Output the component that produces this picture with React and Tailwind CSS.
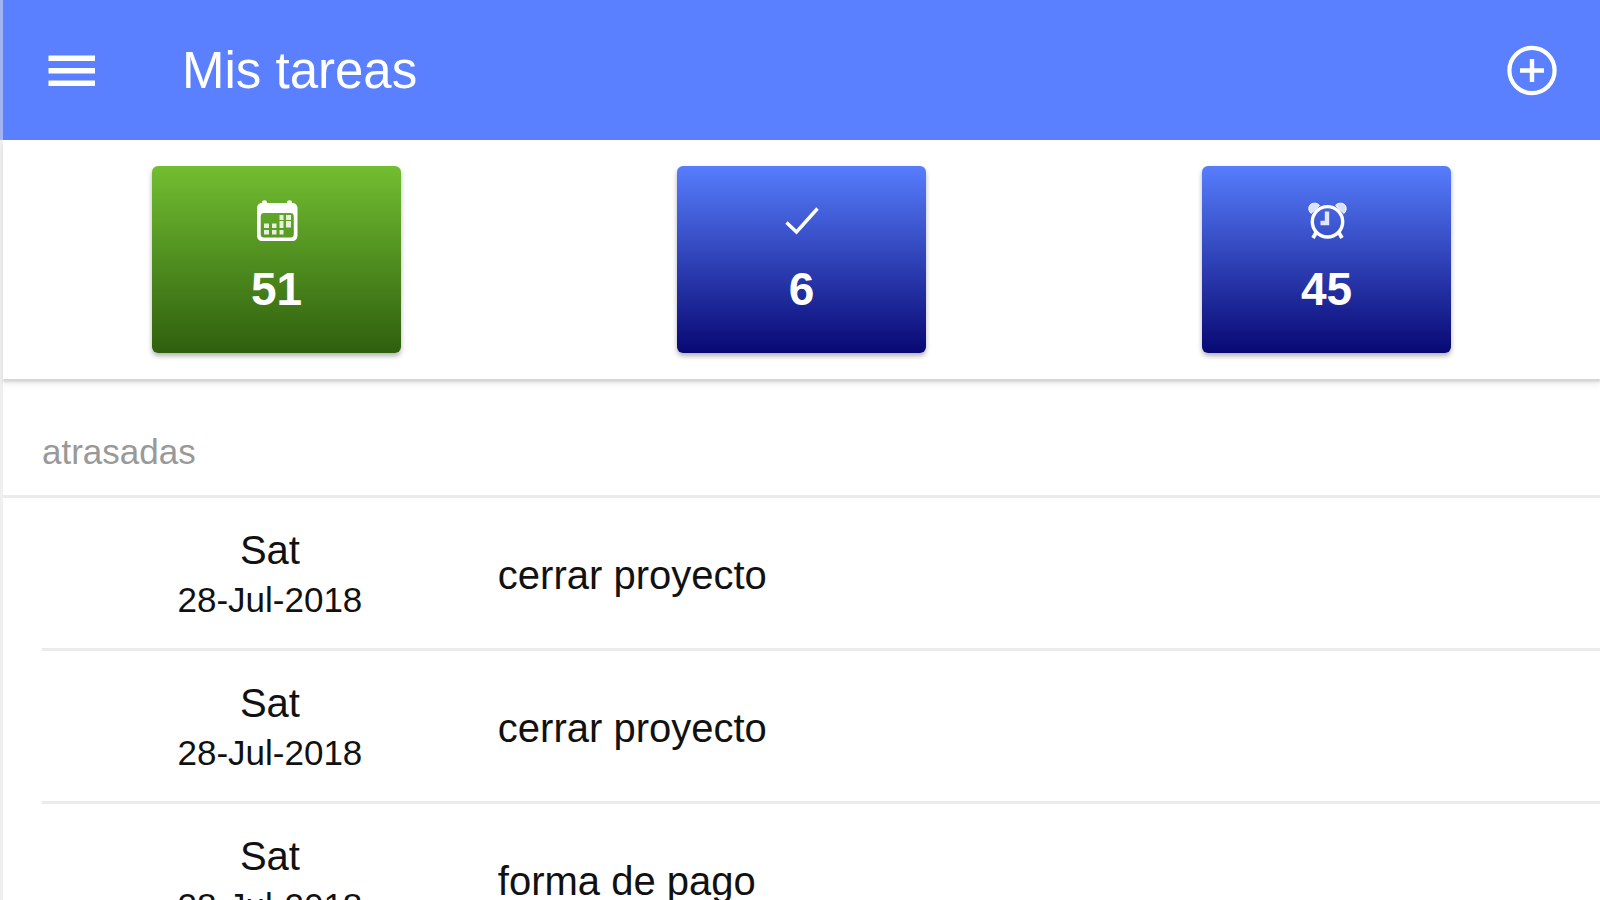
import React, { useState } from 'react';
import clsx from 'clsx';

const MenuIcon = () => (
    <svg className="w-12 h-12" viewBox="0 0 48 48" stroke="currentColor" strokeWidth="5.6" aria-hidden="true">
        <path d="M0.5 11.2H47M0.5 23.7H47M0.5 36.2H47" />
    </svg>
);

const AddIcon = () => (
    <svg className="w-[52px] h-[52px]" viewBox="0 0 52 52" fill="none" stroke="currentColor" aria-hidden="true">
        <circle cx="26" cy="25.500" r="22.6" strokeWidth="4.2" />
        <path d="M26 14V37M14 25.500H38" strokeWidth="4.4" />
    </svg>
);

const CalendarIcon = () => (
    <svg className="w-11 h-11" viewBox="0 0 44 44" aria-hidden="true">
        <path
            fill="currentColor"
            fillRule="evenodd"
            d="M7 4V3.2a2.4 1.8 0 0 1 5 0V4H32V3.2a2.4 1.8 0 0 1 5 0V4c3.500 0 5.500 2 5.500 5.500V36.500c0 3.500-2 5.500-5.500 5.500H7.500C4 42 2 40 2 36.500V9.500C2 6 4 4 7 4ZM9 14c-2 0-3.300 1.200-3.300 3.300V35c0 2.500 1 3.500 3.300 3.500H35.500c2.300 0 3.300-1 3.300-3.500V17.300c0-2.100-1.300-3.300-3.300-3.300Z"
        />
        <g fill="currentColor" fillOpacity="0.85">
            <path d="M24.500 16h4v5h-4zM31 16h5v5h-5z" />
            <path d="M9 24.500h5v4.500H9zM17 24.500h4.500v4.500H17zM24.500 22h4v7h-4zM31 22h5v6.500h-5z" />
            <path d="M9 31h5v4.500H9zM17 31h4.500v4.500H17zM24.500 31h4v4.500h-4z" />
        </g>
    </svg>
);

const CheckIcon = () => (
    <svg className="w-11 h-11" viewBox="0 0 44 44" fill="none" stroke="currentColor" strokeWidth="3.4" aria-hidden="true">
        <path d="M6.500 23.500L16.500 33L37.500 9.500" />
    </svg>
);

const AlarmIcon = () => (
    <svg className="w-11 h-11" viewBox="0 0 44 44" fill="none" stroke="currentColor" aria-hidden="true">
        <circle cx="22.500" cy="22.800" r="15.200" strokeWidth="3.400" />
        <path d="M22 12.500V24H15.500" strokeWidth="4.400" strokeOpacity="0.85" />
        <path d="M11.500 33L8 39M33.500 33L37 39" strokeWidth="3.800" />
        <path
            fill="currentColor"
            fillOpacity="0.8"
            strokeWidth="1"
            d="M4 11C3 7 6 4.200 9.500 4.200C11.500 4.200 13.500 5 14.500 6.400L6 14.400C5 13.500 4.300 12.300 4 11ZM41 11C42 7 39 4.200 35.500 4.200C33.500 4.200 31.500 5 30.500 6.400L39 14.400C40 13.500 40.700 12.300 41 11Z"
        />
    </svg>
);

const stats = [
    { id: "all", label: "Todas", count: 51, icon: CalendarIcon },
    { id: "done", label: "Terminadas", count: 6, icon: CheckIcon },
    { id: "late", label: "Atrasadas", count: 45, icon: AlarmIcon },
];

const tasks = [
    { id: 1, day: "Sat", date: "28-Jul-2018", title: "cerrar proyecto" },
    { id: 2, day: "Sat", date: "28-Jul-2018", title: "cerrar proyecto" },
    { id: 3, day: "Sat", date: "28-Jul-2018", title: "forma de pago" },
];

const StatCard = ({ stat, active, onClick }) => {
    const Icon = stat.icon;
    return (
        <button
            type="button"
            aria-label={stat.label + ": " + stat.count}
            aria-pressed={active}
            onClick={onClick}
            className={clsx(
                "flex flex-col items-center gap-5 w-[249px] pt-[33px] pb-[38px] rounded-md text-white bg-linear-to-b/srgb shadow-[0_3px_5px_rgba(0,0,0,0.3)]",
                active ? "from-[#72be31] to-[#2f5f0e]" : "from-[#577dfd] to-[#080873]"
            )}
        >
            <Icon />
            <span className="text-[46px] leading-[52px] font-bold">{stat.count}</span>
        </button>
    );
};

const TaskRow = ({ task }) => (
    <li className="flex items-center h-[153px] pt-1 border-b-3 border-[#ebebeb]">
        <div className="w-[29%] pl-1 text-center leading-[50px]">
            <p className="text-[40px] leading-[50px]">{task.day}</p>
            <p className="text-[35px] leading-[50px]">{task.date}</p>
        </div>
        <p className="pl-1 text-[40px] leading-[50px]">{task.title}</p>
    </li>
);

const App = () => {
    const [filter, setFilter] = useState("all");

    return (
        <div className="h-screen overflow-hidden bg-white text-[#111] font-['Liberation_Sans',Arial,sans-serif]">
            <header className="flex items-center h-[140px] pt-[2px] pl-[45px] pr-[42px] bg-[#5a80ff] text-white border-l-3 border-[#a3b3f4]">
                <button type="button" aria-label="Menu">
                    <MenuIcon />
                </button>
                <h1 className="ml-[86px] grow text-[51px] leading-[60px]">Mis tareas</h1>
                <button type="button" aria-label="Nueva tarea">
                    <AddIcon />
                </button>
            </header>

            <main className="border-l-3 border-[#efefef]">
                <div className="grid grid-cols-3 justify-items-center px-[11px] pt-[26px] pb-[26px] shadow-[0_3px_2px_#d6d6d6,0_6px_6px_rgba(0,0,0,0.06)]">
                    {stats.map((stat) => (
                        <StatCard
                            key={stat.id}
                            stat={stat}
                            active={filter === stat.id}
                            onClick={() => setFilter(stat.id)}
                        />
                    ))}
                </div>

                <section>
                    <h2 className="h-[119px] pt-[53px] pl-[39px] text-[35px] leading-[40px] text-[#999] border-b-3 border-[#ebebeb]">
                        atrasadas
                    </h2>
                    <ul className="pl-[39px]">
                        {tasks.map((task) => (
                            <TaskRow key={task.id} task={task} />
                        ))}
                    </ul>
                </section>
            </main>
        </div>
    );
};

export default App;
